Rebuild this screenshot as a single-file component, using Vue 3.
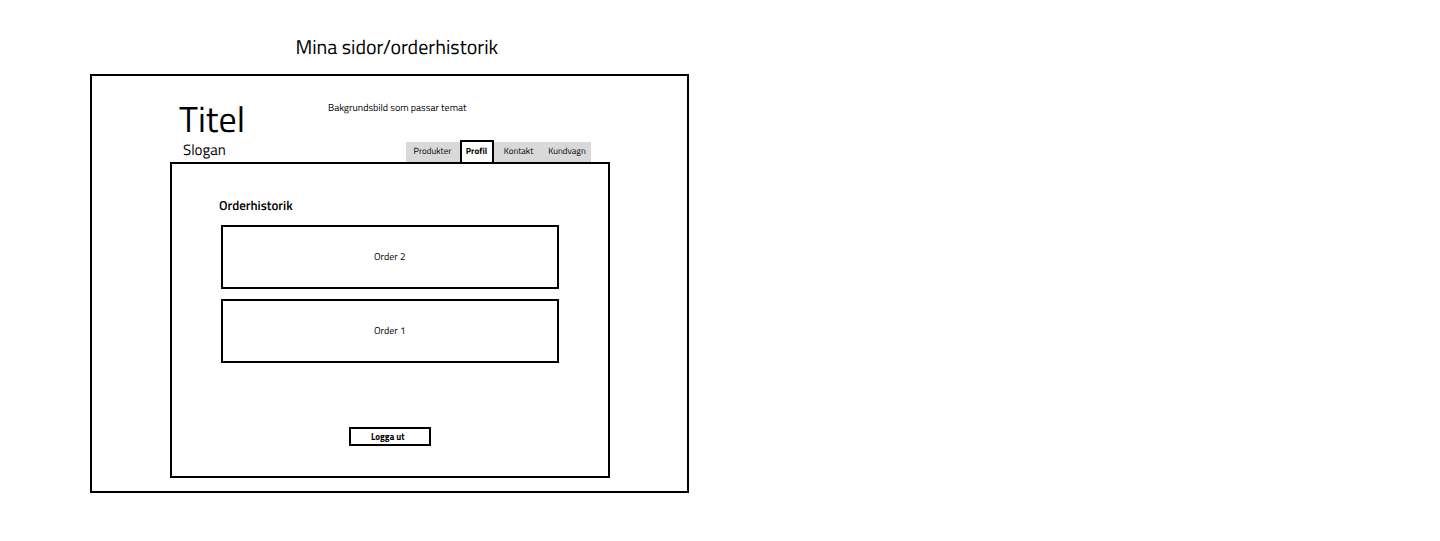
<script setup>
const tabs = [
  { label: 'Produkter', key: 'products' },
  { label: 'Profil', key: 'profile', active: true },
  { label: 'Kontakt', key: 'contact' },
  { label: 'Kundvagn', key: 'cart' },
]
const orders = ['Order 2', 'Order 1']
</script>

<template>
  <main class="page">
    <section class="sketch">
      <h1 class="caption">Mina sidor/orderhistorik</h1>
      <div class="frame">
        <header class="header">
          <div class="brand">
            <p class="title">Titel</p>
            <p class="slogan">Slogan</p>
          </div>
          <div class="side">
            <p class="note">Bakgrundsbild som passar temat</p>
            <nav class="tabs">
              <a
                v-for="tab in tabs"
                :key="tab.key"
                href="#"
                class="tab"
                :class="[tab.key, { active: tab.active }]"
                :aria-current="tab.active ? 'page' : null"
              >{{ tab.label }}</a>
            </nav>
          </div>
        </header>
        <div class="panel">
          <h2 class="heading">Orderhistorik</h2>
          <ul class="orders">
            <li v-for="order in orders" :key="order" class="order">{{ order }}</li>
          </ul>
          <button type="button" class="logout">Logga ut</button>
        </div>
      </div>
    </section>
  </main>
</template>

<style>
body {
  margin: 0;
  background: #fff;
}
</style>

<style scoped>
.page {
  padding: 32px 90px 48px;
  color: #000;
  font-family: "Titillium Web", Roboto, "Noto Sans", sans-serif;
  font-size: 10px;
  font-weight: 500;
  line-height: 16px;
  text-rendering: geometricPrecision;
}
.sketch {
  width: 47.5%;
  min-width: 540px;
}
.caption,
.title,
.slogan,
.note,
.heading {
  margin: 0;
  font-weight: 500;
}
.caption {
  padding-left: 15px;
  font-size: 20px;
  font-weight: 400;
  line-height: 30px;
  text-align: center;
}
.frame {
  box-sizing: border-box;
  margin-top: 12px;
  padding: 24px 77px 13px 78px;
  border: 2px solid #000;
}
.header {
  display: flex;
}
.brand {
  flex: 0 0 158px;
}
.title {
  padding-left: 9px;
  font-size: 36px;
  line-height: 38px;
}
.slogan {
  padding-left: 13px;
  font-size: 15px;
  line-height: 24px;
}
.side {
  display: flex;
  flex: 1;
  flex-direction: column;
  justify-content: space-between;
}
.tabs {
  display: flex;
  align-items: flex-end;
  justify-content: flex-end;
  padding-right: 19px;
}
.tab {
  box-sizing: border-box;
  width: 50px;
  height: 20px;
  background: #d9d9d9;
  color: #000;
  font-size: 9px;
  line-height: 20px;
  text-align: center;
  text-decoration: none;
}
.tab.products {
  width: 54px;
}
.tab.cart {
  width: 47px;
}
.tab.active {
  width: 34px;
  height: 22px;
  border: 2px solid #000;
  border-bottom: 0;
  background: #fff;
  font-weight: 700;
}
.panel {
  padding: 32px 49px 30px;
  border: 2px solid #000;
}
.heading {
  margin-left: -2px;
  font-size: 13px;
  font-weight: 600;
  line-height: 20px;
}
.orders {
  display: grid;
  gap: 10px;
  margin: 9px 0 64px;
  padding: 0;
  list-style: none;
}
.order {
  display: flex;
  align-items: center;
  justify-content: center;
  height: 60px;
  border: 2px solid #000;
}
.logout {
  display: block;
  box-sizing: border-box;
  width: 82px;
  height: 19px;
  margin: 0 auto;
  padding: 0 4px 0 0;
  border: 2px solid #000;
  background: #fff;
  color: #000;
  font-family: inherit;
  font-size: 9px;
  font-weight: 700;
  line-height: 15px;
}
</style>
